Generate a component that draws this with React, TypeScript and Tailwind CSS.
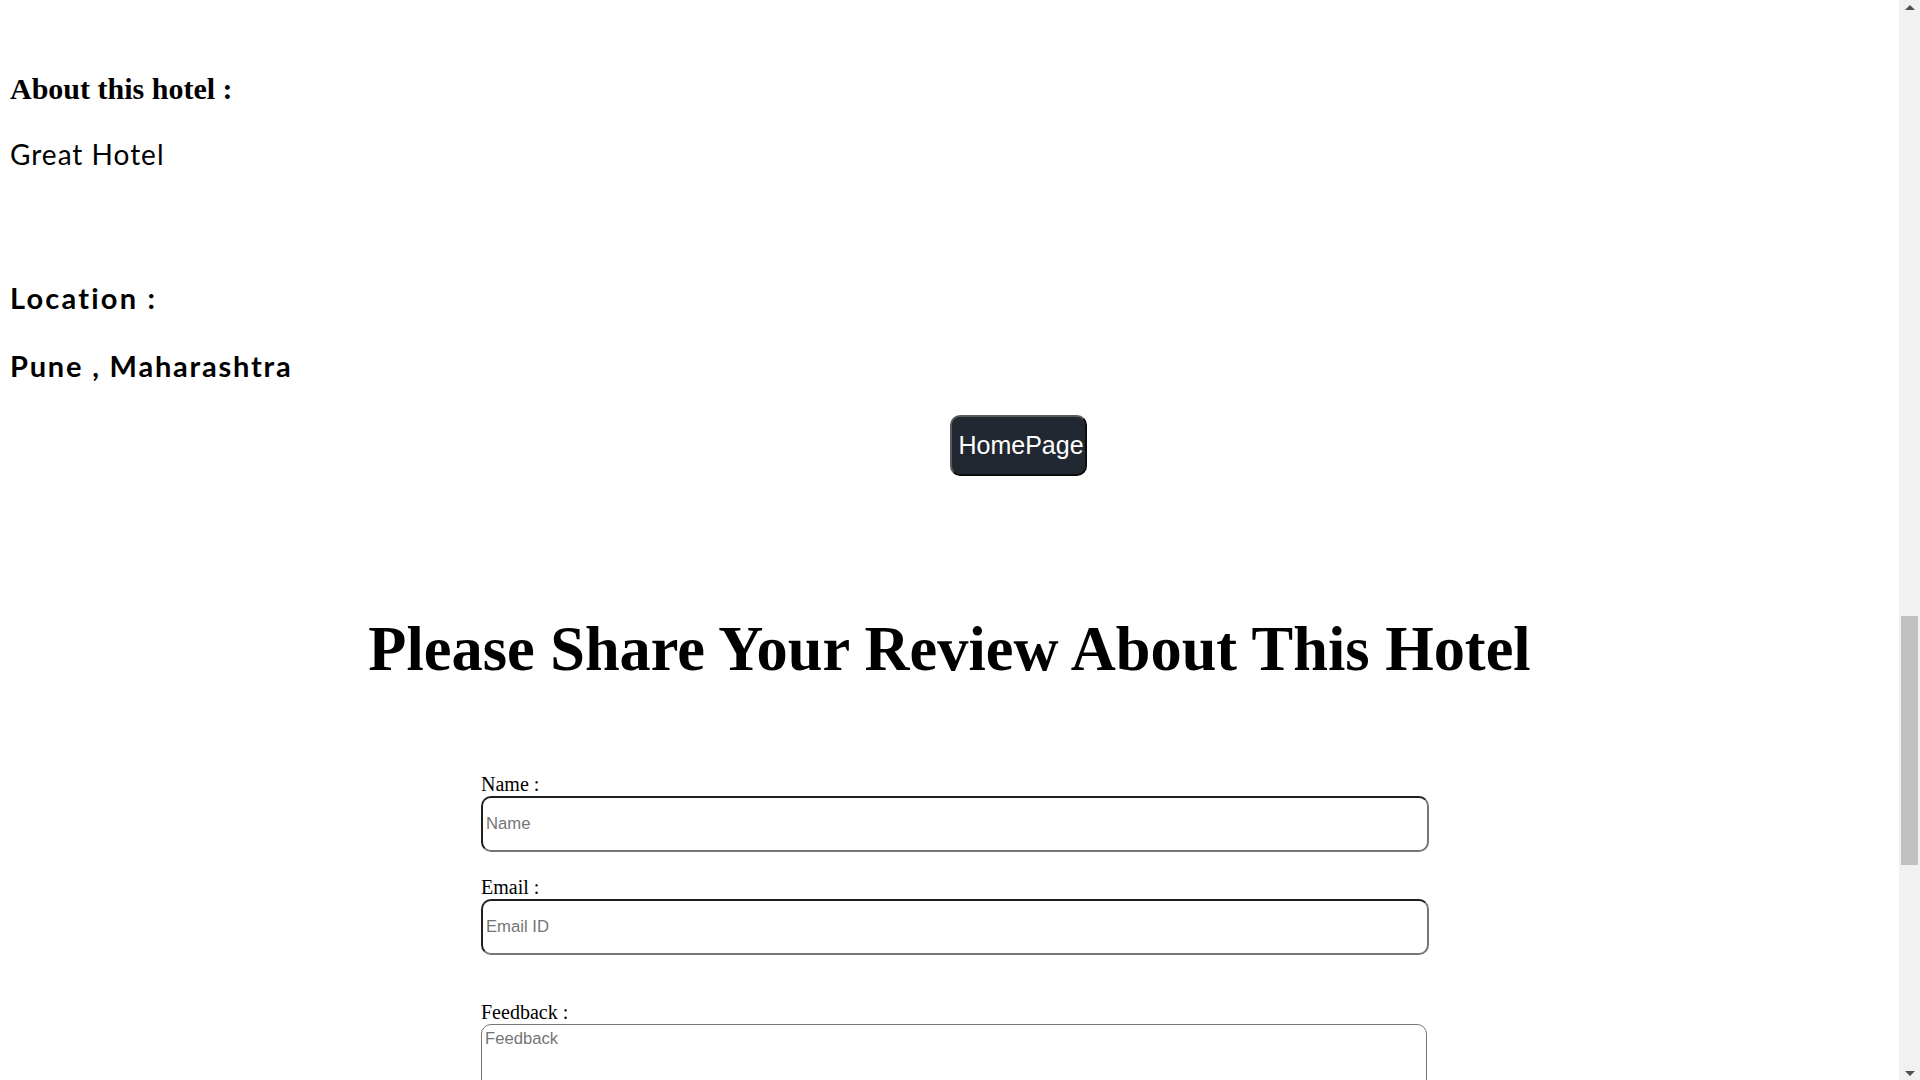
import React from 'react';

const serif = "font-['Liberation_Serif',serif]";
const humanist = "font-['Lato','Noto_Sans',sans-serif]";
const arial = "font-['Liberation_Sans',Arial,sans-serif]";

const Field = ({ label, placeholder, gap }: { label: string; placeholder: string; gap: string }) => (
  <div className={gap}>
    <label className={`${serif} block text-[20px] leading-[22px] text-black`}>{label}</label>
    <input
      placeholder={placeholder}
      className={`${arial} mt-[1px] block w-[948px] h-[56px] px-[3px] text-[16.67px] placeholder:text-[#757575] rounded-[10px] border-2 border-t-[#1f1f1f] border-l-[#1f1f1f] border-b-[#767676] border-r-[#767676] outline-none`}
    />
  </div>
);

const Scrollbar = () => (
  <div className="w-[21px] h-full bg-[#f1f1f1] flex flex-col items-center shrink-0">
    <div className="h-[14px] flex items-center justify-center">
      <div className="w-0 h-0 border-l-[5px] border-r-[5px] border-b-[5px] border-l-transparent border-r-transparent border-b-[#505050]" />
    </div>
    <div className="flex-1 w-full px-[2px] flex flex-col">
      <div className="h-[602px]" />
      <div className="h-[249px] w-full bg-[#c1c1c1]" />
    </div>
    <div className="h-[14px] flex items-center justify-center">
      <div className="w-0 h-0 border-l-[5px] border-r-[5px] border-t-[5px] border-l-transparent border-r-transparent border-t-[#505050]" />
    </div>
  </div>
);

export default function App() {
  return (
    <div className="w-screen h-screen overflow-hidden flex bg-white">
      <main className="flex-1 h-full overflow-hidden">
        <section className="pl-[10px] pt-[72px]">
          <h3 className={`${serif} text-[30px] leading-[34px] font-bold text-black`}>About this hotel :</h3>
          <p className={`${humanist} mt-[31px] text-[28px] leading-[34px] tracking-[1px] text-black`}>Great Hotel</p>
          <h3 className={`${humanist} mt-[110px] text-[29px] leading-[34px] tracking-[2.2px] font-bold text-black`}>
            Location :
          </h3>
          <p className={`${humanist} mt-[34px] text-[29px] leading-[34px] tracking-[1.8px] font-bold text-black`}>
            Pune , Maharashtra
          </p>
        </section>

        <div className="mt-[32px] ml-[50%]">
          <button
            className={`${arial} w-[137px] h-[61px] pl-[7px] text-left whitespace-nowrap text-[25px] text-white bg-[#222831] rounded-[10px] border-2 border-t-[#5a5a5a] border-l-[#5a5a5a] border-b-[#0d0d0d] border-r-[#0d0d0d]`}
          >
            HomePage
          </button>
        </div>

        <h1 className={`${serif} mt-[138px] text-center text-[62.4px] leading-[69px] font-bold text-black`}>
          Please Share Your Review About This Hotel
        </h1>

        <form className="ml-[481px] mt-[90px]">
          <Field label="Name :" placeholder="Name" gap="" />
          <Field label="Email :" placeholder="Email ID" gap="mt-[24px]" />
          <div className="mt-[46px]">
            <label className={`${serif} block text-[20px] leading-[22px] text-black`}>Feedback :</label>
            <textarea
              placeholder="Feedback"
              className={`${arial} mt-[1px] block w-[946px] h-[80px] px-[3px] pt-[1px] text-[16.67px] placeholder:text-[#757575] rounded-[10px] border border-[#767676] outline-none`}
            />
          </div>
        </form>
      </main>
      <Scrollbar />
    </div>
  );
}
